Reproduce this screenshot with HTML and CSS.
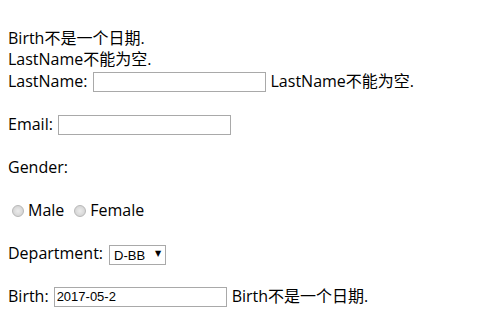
FILE: index.html
```html
<!DOCTYPE html>
<html>
<head>
<meta charset="utf-8">
<link rel="stylesheet" href="styles.css">
</head>
<body>
<form class="form">
  <div class="errors">
    <div class="line">Birth不是一个日期.</div>
    <div class="line">LastName不能为空.</div>
  </div>
  <div class="fields">
    <div class="row">
      <span>LastName:</span>
      <input class="text" type="text">
      <span>LastName不能为空.</span>
    </div>
    <div class="row">
      <span>Email:</span>
      <input class="text" type="text">
    </div>
    <div class="row">
      <span>Gender:</span>
    </div>
    <div class="row radios">
      <label class="opt"><input class="radio" type="radio" name="g">Male</label>
      <label class="opt"><input class="radio" type="radio" name="g">Female</label>
    </div>
    <div class="row">
      <span>Department:</span>
      <span class="select-wrap">
        <select class="select"><option>D-BB</option></select>
      </span>
    </div>
    <div class="row">
      <span>Birth:</span>
      <input class="text" type="text" value="2017-05-2">
      <span>Birth不是一个日期.</span>
    </div>
  </div>
</form>
</body>
</html>
```

FILE: styles.css
```css
html, body {
  background: #fff;
}
body {
  margin: 8px;
  font-family: "Open Sans", "Noto Sans CJK SC", sans-serif;
  font-size: 16px;
  color: #000;
}
.form {
  margin: 0;
  padding-top: 20px;
}
.errors .line {
  height: 21px;
  line-height: 21px;
  white-space: nowrap;
}
.fields {
  display: flex;
  flex-direction: column;
  gap: 20px;
}
.row {
  height: 23px;
  display: flex;
  align-items: center;
  gap: 5px;
  white-space: nowrap;
  line-height: 21px;
}
.text {
  box-sizing: border-box;
  width: 173px;
  height: 20px;
  margin: 0;
  padding: 0 2px;
  border: 1px solid #a9a9a9;
  background: #fff;
  font-family: "Liberation Sans", Arial, sans-serif;
  font-size: 13px;
  color: #000;
  outline: none;
}
.radios {
  gap: 0;
}
.opt {
  display: flex;
  align-items: center;
  margin-right: 6px;
}
.radio {
  appearance: none;
  -webkit-appearance: none;
  box-sizing: border-box;
  width: 12px;
  height: 12px;
  margin: 0 4px 0 4px;
  border: 1px solid #b8b8b8;
  border-radius: 50%;
  background: radial-gradient(circle at 50% 50%, #ececec 0%, #d6d6d6 70%, #c8c8c8 100%);
}
.select-wrap {
  position: relative;
  display: inline-block;
  height: 20px;
  margin-left: 1px;
}
.select {
  appearance: none;
  -webkit-appearance: none;
  box-sizing: border-box;
  width: 57px;
  height: 20px;
  margin: 0;
  padding: 0 0 0 4px;
  border: 1px solid #a9a9a9;
  border-radius: 0;
  background: #fff;
  font-family: "Liberation Sans", Arial, sans-serif;
  font-size: 13px;
  color: #000;
}
.select-wrap::after {
  content: "▼";
  position: absolute;
  right: 5px;
  top: 5px;
  font-family: "DejaVu Sans", sans-serif;
  font-size: 8px;
  line-height: 10px;
  color: #000;
  pointer-events: none;
}
```
